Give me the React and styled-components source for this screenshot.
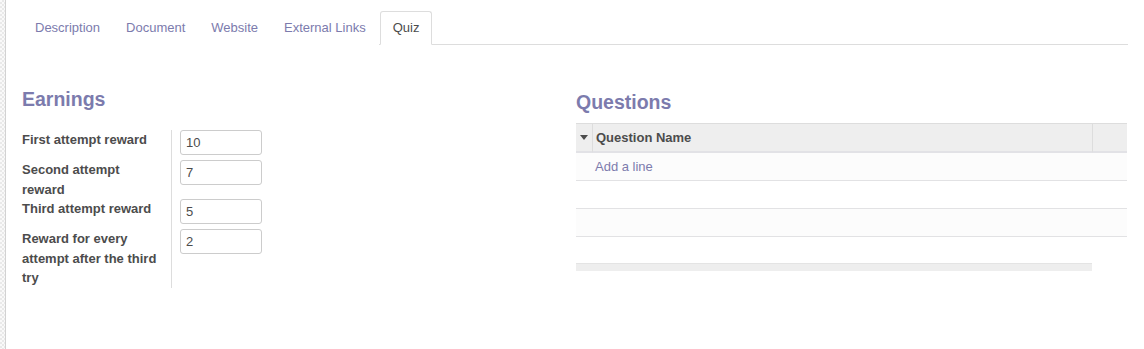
import React from 'react';
import styled, { createGlobalStyle } from 'styled-components';

const GlobalStyle = createGlobalStyle`
  body {
    margin: 0;
    background: #fff;
    font-family: "Liberation Sans", Arial, sans-serif;
    font-size: 13px;
    color: #4c4c4c;
  }
`;

const Page = styled.div`
  display: flex;
  min-height: 349px;
`;

const Gutter = styled.div`
  width: 5px;
  flex-shrink: 0;
  background: repeating-conic-gradient(#e9e9e9 0 25%, #f9f9f9 0 50%) 0 0 / 4px 4px;
  border-right: 1px solid #d2d2d2;
`;

const Sheet = styled.div`
  flex: 1;
  padding: 11px 16px 0 16px;
`;

const TabBar = styled.ul`
  display: flex;
  margin: 0;
  padding: 0;
  list-style: none;
  border-bottom: 1px solid #ddd;
`;

const Tab = styled.li`
  margin-bottom: -1px;
  margin-left: ${props => props.active ? '1px' : '0'};
  padding: 7px 12px;
  line-height: 18px;
  border: 1px solid ${props => props.active ? '#ddd' : 'transparent'};
  border-bottom-color: ${props => props.active ? '#fff' : 'transparent'};
  border-radius: 3px 3px 0 0;
  background: #fff;
  color: ${props => props.active ? '#4c4c4c' : '#7c7bad'};
  cursor: pointer;
`;

const Columns = styled.div`
  display: grid;
  grid-template-columns: 554px 1fr;
`;

const Group = styled.div`
  padding-top: ${props => props.top}px;
`;

const GroupTitle = styled.h2`
  margin: 0 0 ${props => props.gap}px;
  font-size: 19.5px;
  line-height: 21px;
  font-weight: bold;
  color: #7c7bad;
`;

const FormTable = styled.table`
  border-collapse: separate;
  border-spacing: 0;
`;

const Label = styled.td`
  width: 141px;
  padding: 0 8px 0 0;
  border-right: 1px solid #ddd;
  vertical-align: top;
  font-weight: bold;
  line-height: 19.5px;
  color: #4c4c4c;
`;

const Field = styled.td`
  padding: 0 0 0 8px;
  vertical-align: top;
`;

const NumberInput = styled.input`
  display: block;
  box-sizing: border-box;
  width: 82px;
  height: 25px;
  margin: 0 0 5px;
  padding: 0 5px;
  border: 1px solid #ccc;
  border-radius: 3px;
  font-family: inherit;
  font-size: 13px;
  color: #4c4c4c;
`;

const ListTable = styled.table`
  width: 551px;
  border-collapse: separate;
  border-spacing: 0;
`;

const HeadCell = styled.th`
  height: 27px;
  padding: 0 3px;
  background: #eee;
  border-top: 1px solid #ddd;
  border-bottom: 2px solid #e2e2e6;
  border-left: ${props => props.divided ? '1px solid #ddd' : 'none'};
  width: ${props => props.w ? props.w + 'px' : 'auto'};
  text-align: left;
  font-weight: bold;
  color: #4c4c4c;
  vertical-align: middle;
`;

const Caret = styled.span`
  display: block;
  width: 0;
  height: 0;
  margin-left: 1px;
  border-left: 4px solid transparent;
  border-right: 4px solid transparent;
  border-top: 5px solid #4c4c4c;
`;

const Row = styled.tr`
  background: ${props => props.shaded ? '#fcfcfc' : '#fff'};
`;

const Cell = styled.td`
  height: ${props => props.last ? 26 : 27}px;
  padding: 0 0 0 19px;
  border-bottom: ${props => props.last ? 'none' : '1px solid #e2e2e4'};
  vertical-align: middle;
`;

const AddLine = styled.a`
  color: #7c7bad;
  cursor: pointer;
`;

const FootCell = styled.td`
  height: 7px;
  padding: 0;
  background: ${props => props.blank ? 'transparent' : '#eee'};
  border-top: ${props => props.blank ? 'none' : '1px solid #e4e4e4'};
`;

const tabs = ['Description', 'Document', 'Website', 'External Links', 'Quiz'];

const rewards = [
  { label: 'First attempt reward', value: '10' },
  { label: 'Second attempt reward', value: '7' },
  { label: 'Third attempt reward', value: '5' },
  { label: 'Reward for every attempt after the third try', value: '2' },
];

const App = () => {
  return (
    <>
      <GlobalStyle />
      <Page>
        <Gutter />
        <Sheet>
          <TabBar>
            {tabs.map(t => (
              <Tab key={t} active={t === 'Quiz'}>{t}</Tab>
            ))}
          </TabBar>

          <Columns>
            <Group top={44}>
              <GroupTitle gap={20}>Earnings</GroupTitle>
              <FormTable>
                <tbody>
                  {rewards.map(r => (
                    <tr key={r.label}>
                      <Label>{r.label}</Label>
                      <Field>
                        <NumberInput defaultValue={r.value} />
                      </Field>
                    </tr>
                  ))}
                </tbody>
              </FormTable>
            </Group>

            <Group top={47}>
              <GroupTitle gap={10}>Questions</GroupTitle>
              <ListTable>
                <thead>
                  <tr>
                    <HeadCell w={10}><Caret /></HeadCell>
                    <HeadCell divided>Question Name</HeadCell>
                    <HeadCell divided w={28} />
                  </tr>
                </thead>
                <tbody>
                  <Row shaded>
                    <Cell colSpan={3}><AddLine>Add a line</AddLine></Cell>
                  </Row>
                  <Row>
                    <Cell colSpan={3} />
                  </Row>
                  <Row shaded>
                    <Cell colSpan={3} />
                  </Row>
                  <Row>
                    <Cell colSpan={3} last />
                  </Row>
                </tbody>
                <tfoot>
                  <tr>
                    <FootCell colSpan={2} />
                    <FootCell blank />
                  </tr>
                </tfoot>
              </ListTable>
            </Group>
          </Columns>
        </Sheet>
      </Page>
    </>
  );
};

export default App;
